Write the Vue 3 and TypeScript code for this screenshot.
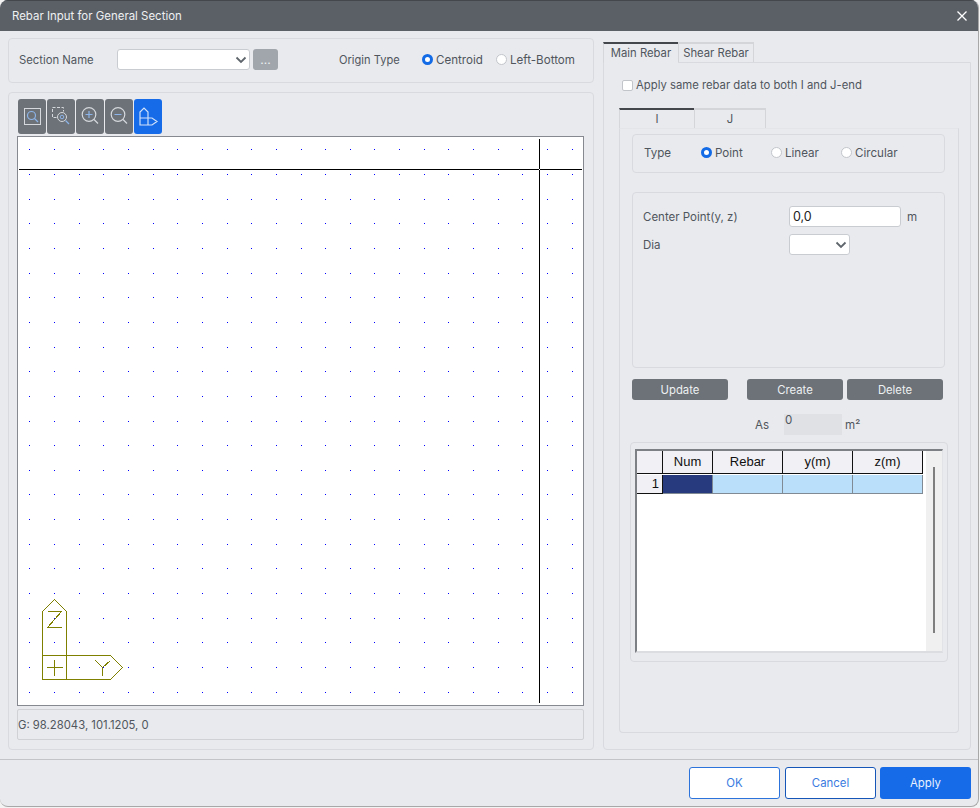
<script setup lang="ts">
const ticks: number[] = [29,54,79,103,128,153,177,202,227,251,276,301,325,350,374,399,424,448,473,498,522,547,572]
const dots: { x: number; y: number }[] = []
for (const t of ticks) {
  for (const u of ticks) dots.push({ x: u, y: t + 120 })
}
const columns: string[] = ['Num', 'Rebar', 'y(m)', 'z(m)']
</script>

<template>
  <div class="window">
    <header class="titlebar">
      <span class="title">Rebar Input for General Section</span>
      <svg class="close" width="12" height="12" viewBox="0 0 12 12"><path d="M1.5 1.5 10.5 10.5M10.5 1.5 1.5 10.5" stroke="#fff" stroke-width="1.3" fill="none" /></svg>
    </header>

    <div class="body">
      <div class="left">
        <section class="panel section-row">
          <span class="lbl section-lbl">Section Name</span>
          <div class="select section-select"><svg class="chev" width="12" height="8" viewBox="0 0 12 8"><path d="M1.5 1.5 6 6l4.5-4.5" stroke="#5f656c" stroke-width="1.8" fill="none" /></svg></div>
          <button class="more">...</button>
          <span class="lbl origin-lbl">Origin Type</span>
          <label class="radio on origin-a"><i></i>Centroid</label>
          <label class="radio origin-b"><i></i>Left-Bottom</label>
        </section>

        <section class="panel canvas-panel">
          <div class="toolbar">
            <button class="tool">
              <svg width="28" height="35" viewBox="0 0 28 35"><rect x="6.5" y="9.5" width="16" height="16" fill="none" stroke="#d5d8dc" /><circle cx="13.5" cy="16.5" r="4" fill="none" stroke="#8db4e8" stroke-width="1.2" /><path d="M16.5 19.5l3.5 3.5" stroke="#8db4e8" stroke-width="1.2" /></svg>
            </button>
            <button class="tool">
              <svg width="28" height="35" viewBox="0 0 28 35"><path d="M5.5 13v-4.500h11v4M5.500 15v3.500h4" fill="none" stroke="#d5d8dc" stroke-dasharray="3 1.500" /><circle cx="15" cy="18" r="4.500" fill="none" stroke="#d5d8dc" /><circle cx="15" cy="18" r="1.800" fill="none" stroke="#8db4e8" /><path d="M18.500 21.500 22 25" stroke="#8db4e8" stroke-width="1.200" /></svg>
            </button>
            <button class="tool">
              <svg width="28" height="35" viewBox="0 0 28 35"><circle cx="13" cy="15.500" r="6.800" fill="none" stroke="#d5d8dc" stroke-width="1.200" /><path d="M13 12v7M9.500 15.500h7" stroke="#8db4e8" stroke-width="1.200" /><path d="M18 20.500l4 4" stroke="#d5d8dc" stroke-width="1.200" /></svg>
            </button>
            <button class="tool">
              <svg width="28" height="35" viewBox="0 0 28 35"><circle cx="13" cy="15.500" r="6.800" fill="none" stroke="#d5d8dc" stroke-width="1.200" /><path d="M9.500 15.500h7" stroke="#8db4e8" stroke-width="1.200" /><path d="M18 20.500l4 4" stroke="#d5d8dc" stroke-width="1.200" /></svg>
            </button>
            <button class="tool active">
              <svg width="28" height="35" viewBox="0 0 28 35"><path d="M6 26V13l4-4 4 4v6h4l5 3.500-5 3.500zM6 19h8v7" fill="none" stroke="#cfe0f9" stroke-width="1.200" /></svg>
            </button>
          </div>

          <div class="canvas">
            <svg class="drawing" width="565" height="568" viewBox="18 137 565 568">
              <rect v-for="d in dots" :key="`${d.x}-${d.y}`" :x="d.x" :y="d.y" width="1" height="1" fill="#0000ff" />
              <g shape-rendering="crispEdges">
                <rect x="19" y="169" width="563" height="1" fill="#000" />
                <rect x="539" y="139" width="1" height="564" fill="#000" />
                <rect x="539" y="169" width="1" height="1" fill="#fff" />
                <g fill="none" stroke="#808000">
                  <path d="M42.500 655.500V611.500L54.500 599.500 66.500 611.500V679.500" />
                  <path d="M42.500 655.500H110.500L122.500 667.500 110.500 679.500H42.500V655.500" />
                  <path d="M46.500 667.500H62.500M54.500 659.500V675.500" />
                  <path d="M47.500 611.500H61.500L47.500 627.500H61.500" />
                  <path d="M95.500 660.500 102.500 667.500 110.500 660.500M102.500 667.500V675.500" />
                </g>
              </g>
            </svg>
          </div>

          <div class="status">G: 98.28043, 101.1205, 0</div>
        </section>
      </div>

      <div class="right">
        <nav class="tabs">
          <span class="tab current main-tab">Main Rebar</span>
          <span class="tab shear-tab">Shear Rebar</span>
        </nav>
        <section class="tab-panel">
          <label class="check"><i></i>Apply same rebar data to both I and J-end</label>

          <nav class="tabs sub-tabs">
            <span class="tab current sub-i">I</span>
            <span class="tab sub-j">J</span>
          </nav>

          <div class="sub-panel">
            <div class="panel type-row">
              <span class="lbl type-lbl">Type</span>
              <label class="radio on type-a"><i></i>Point</label>
              <label class="radio type-b"><i></i>Linear</label>
              <label class="radio"><i></i>Circular</label>
            </div>

            <div class="panel form-box">
              <div class="form-row">
                <span class="lbl form-lbl">Center Point(y, z)</span>
                <div class="input">0,0</div>
                <span class="lbl unit">m</span>
              </div>
              <div class="form-row dia-row">
                <span class="lbl form-lbl">Dia</span>
                <div class="select dia-select"><svg class="chev" width="12" height="8" viewBox="0 0 12 8"><path d="M1.500 1.500 6 6l4.500-4.500" stroke="#5f656c" stroke-width="1.800" fill="none" /></svg></div>
              </div>
            </div>

            <div class="actions">
              <button class="action update">Update</button>
              <button class="action create">Create</button>
              <button class="action">Delete</button>
            </div>

            <div class="as-row">
              <span class="lbl as-lbl">As</span>
              <div class="as-value">0</div>
              <span class="lbl as-unit">m²</span>
            </div>

            <div class="panel table-panel">
              <div class="grid">
                <div class="grid-main">
                  <div class="grid-row head">
                    <div class="cell corner"></div>
                    <div v-for="c in columns" :key="c" class="cell hcell" :class="{ first: c === 'Num' }">{{ c }}</div>
                  </div>
                  <div class="grid-row data">
                    <div class="cell corner rownum">1</div>
                    <div class="cell dcell navy first"></div>
                    <div class="cell dcell"></div>
                    <div class="cell dcell"></div>
                    <div class="cell dcell"></div>
                  </div>
                </div>
                <div class="scrollbar"><span class="thumb"></span></div>
              </div>
            </div>
          </div>
        </section>
      </div>
    </div>

    <footer class="footer">
      <button class="dlg outline">OK</button>
      <button class="dlg outline cancel">Cancel</button>
      <button class="dlg primary">Apply</button>
    </footer>
  </div>
</template>

<style>
html, body { margin: 0; background: #f3f3f3; }
</style>

<style scoped>
.window {
  width: 978px;
  height: 806px;
  background: #e9eaee;
  border-right: 1px solid #a8a8a8;
  border-bottom: 1px solid #a8a8a8;
  border-radius: 8px;
  overflow: hidden;
  display: flex;
  flex-direction: column;
  font-family: Inter, "Liberation Sans", sans-serif;
  font-size: 11.600px;
  color: #50565d;
}
.titlebar {
  height: 31px;
  flex: none;
  background: #5b6067;
  border-top: 1px solid #44484d;
  box-sizing: border-box;
  display: flex;
  align-items: center;
  justify-content: space-between;
  padding: 0 10px 0 12px;
  color: #eef0f2;
}
.title { font-size: 11.450px; }
.close { display: block; }
.body { flex: 1; display: flex; padding: 7px 0 0 8px; gap: 9px; }
.left { width: 586px; flex: none; display: flex; flex-direction: column; gap: 9px; }
.panel { border: 1px solid #d8dadf; border-radius: 4px; box-sizing: border-box; }
.section-row { height: 45px; display: flex; align-items: center; padding-left: 10px; padding-bottom: 2px; }
.lbl { white-space: nowrap; }
.section-lbl { width: 98px; font-size: 11.300px; }
.select { position: relative; background: #fff; border: 1px solid #c9ccd1; border-radius: 3px; box-sizing: border-box; height: 21px; }
.section-select { width: 133px; }
.chev { position: absolute; right: 2px; top: 6px; }
.more { width: 25px; height: 21px; margin-left: 3px; background: #a1a6ac; color: #eef0f2; border: 0; border-radius: 3px; font: 12px Inter, sans-serif; padding: 0; }
.origin-lbl { margin-left: 61px; width: 83px; font-size: 11.100px; }
.radio { display: flex; align-items: center; gap: 3px; white-space: nowrap; }
.radio i { width: 11px; height: 11px; box-sizing: border-box; border: 1px solid #c2c5ca; border-radius: 50%; background: #fff; display: block; }
.radio.on i { border: 3.500px solid #146be6; }
.origin-a { width: 74px; }
.canvas-panel { height: 658px; padding: 6px 8px 0 8px; }
.toolbar { display: flex; gap: 1px; margin-left: 1px; height: 35px; }
.tool { width: 28px; height: 35px; padding: 0; border: 0; background: #6c7278; border-radius: 3px; display: block; }
.tool svg { display: block; }
.tool.active { background: #166be8; }
.canvas { margin-top: 2px; width: 567px; height: 570px; box-sizing: border-box; background: #fff; border: 1px solid #868a90; }
.drawing { display: block; }
.status { margin-top: 3px; width: 567px; height: 31px; box-sizing: border-box; border: 1px solid #cfd1d5; border-radius: 2px; display: flex; align-items: center; font-size: 11.300px; }
.right { width: 368px; flex: none; display: flex; flex-direction: column; padding-top: 4px; }
.tabs { display: flex; }
.tab { box-sizing: border-box; text-align: center; font-size: 11.300px; }
.main-tab { width: 75px; height: 21px; line-height: 18px; margin-bottom: -1px; background: #e9eaee; border-top: 2px solid #44484d; border-left: 1px solid #d5d7db; position: relative; z-index: 1; }
.shear-tab { width: 76px; height: 20px; line-height: 18px; border-top: 2px solid #d3d5d9; border-right: 1px solid #d3d5d9; border-left: 1px solid #d3d5d9; }
.tab-panel { height: 688px; box-sizing: border-box; border: 1px solid #d8dadf; border-radius: 0 0 4px 4px; padding: 16px 11px 0 15px; }
.check { display: flex; align-items: center; gap: 3px; height: 12px; margin-left: 3px; white-space: nowrap; font-size: 11.300px; }
.check i { width: 11px; height: 11px; box-sizing: border-box; background: #fff; border: 1px solid #c2c5ca; border-radius: 2px; display: block; }
.sub-tabs { margin-top: 17px; height: 19px; position: relative; }
.sub-i { width: 75px; height: 20px; line-height: 18px; border-top: 2px solid #44484d; border-left: 1px solid #d5d7db; }
.sub-j { width: 72px; height: 20px; line-height: 18px; border-top: 2px solid #d3d5d9; border-left: 1px solid #d3d5d9; border-right: 1px solid #d3d5d9; }
.sub-panel { box-sizing: border-box; height: 605px; margin-top: 1px; border: 1px solid #d8dadf; border-top-color: #e4e5e9; border-radius: 0 0 4px 4px; padding: 5px 12px 0 12px; }
.type-row { height: 39px; width: 313px; display: flex; align-items: center; padding-left: 11px; padding-bottom: 2px; }
.type-lbl { width: 57px; }
.type-a { width: 70px; }
.type-b { width: 70px; }
.form-box { margin-top: 19px; width: 313px; height: 176px; padding: 13px 0 0 10px; }
.form-row { display: flex; align-items: center; height: 21px; }
.dia-row { margin-top: 7px; }
.form-lbl { width: 146px; font-size: 11.500px; }
.input { width: 112px; height: 21px; box-sizing: border-box; background: #fff; border: 1px solid #c9ccd1; border-radius: 3px; padding-left: 3px; line-height: 19px; color: #222; font-size: 12.500px; }
.unit { margin-left: 6px; }
.dia-select { width: 61px; }
.actions { display: flex; margin-top: 11px; height: 21px; }
.action { width: 96px; height: 21px; padding: 0; border: 0; border-radius: 3px; background: #6c7278; color: #eef0f2; font: 11.300px Inter, sans-serif; }
.update { margin-right: 19px; }
.create { margin-right: 4px; }
.as-row { display: flex; height: 21px; margin-top: 14px; align-items: center; }
.as-lbl { margin-left: 123px; width: 29px; }
.as-value { width: 58px; height: 21px; background: #dfe1e5; padding-left: 1px; box-sizing: border-box; line-height: 13px; }
.as-unit { margin-left: 3px; }
.table-panel { margin: 7px 0 0 -2px; width: 318px; height: 220px; padding: 6px 4px 8px 4px; }
.grid { width: 308px; height: 204px; box-sizing: border-box; display: flex; background: #fff; border: 2px solid #7d8085; border-right: 1px solid #e2e3e6; border-bottom: 2px solid #dcdde0; }
.grid-main { width: 289px; flex: none; background: #fff; }
.grid-row { display: flex; font-family: "Liberation Sans", Arial, sans-serif; font-size: 13px; color: #111; }
.head { height: 23px; margin-bottom: 1px; }
.data { height: 19px; }
.cell { box-sizing: border-box; width: 70px; }
.corner { width: 26px; background: #f0f0f5; border-right: 1px solid #111; border-bottom: 1px solid #111; }
.first { width: 50px; }
.hcell { background: #f0f0f5; border-right: 1px solid #111; border-bottom: 1px solid #111; text-align: center; line-height: 22px; }
.rownum { text-align: right; padding-right: 3px; line-height: 17px; }
.dcell { background: #b9dffb; border-right: 1px solid #7f8a94; border-bottom: 1px solid #7f8a94; }
.navy { background: #273a7e; }
.scrollbar { flex: 1; background: #f0f0f0; position: relative; }
.thumb { position: absolute; left: 7px; top: 16px; width: 2px; height: 166px; background: #7f7f7f; }
.footer { flex: none; height: 47px; box-sizing: border-box; border-top: 1px solid #c2c4c8; display: flex; justify-content: flex-end; padding: 7px 7px 0 0; gap: 5px; }
.dlg { width: 91px; height: 32px; padding: 0; border-radius: 3px; font: 11.400px Inter, sans-serif; }
.outline { background: #fff; border: 1px solid #2c74dc; color: #3a7be0; }
.cancel { border-color: #1656b8; }
.primary { width: 91px; margin-left: -1px; background: #166be8; border: 0; color: #e8f1fe; }
</style>
